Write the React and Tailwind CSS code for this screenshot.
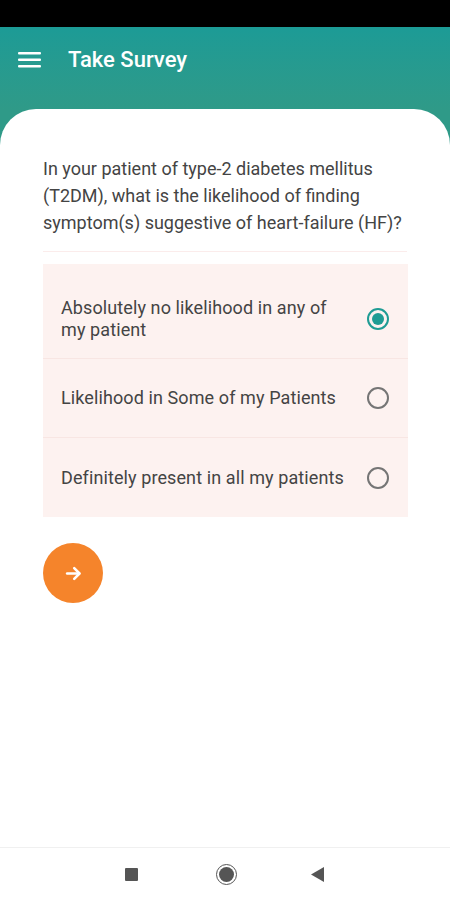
import React, { useState } from "react";

const options = [
  "Absolutely no likelihood in any of my patient",
  "Likelihood in Some of my Patients",
  "Definitely present in all my patients",
];

const Radio = ({ checked }) => (
  <div
    className={`w-[22px] h-[22px] rounded-full border-2 flex items-center justify-center shrink-0 ${
      checked ? "border-[#1f9c94]" : "border-[#757575]"
    }`}
  >
    {checked && <div className="w-[12px] h-[12px] rounded-full bg-[#1f9c94]" />}
  </div>
);

const App = () => {
  const [selected, setSelected] = useState(0);

  return (
    <div
      className="w-[450px] h-[900px] flex flex-col bg-white overflow-hidden"
      style={{ fontFamily: "Roboto, 'Noto Sans', sans-serif" }}
    >
      {/* Status bar */}
      <div className="h-[27px] bg-black shrink-0" />

      {/* Header */}
      <div className="bg-gradient-to-b from-[#1c9b96] to-[#2f9a88] shrink-0">
        <div className="h-[65px] flex items-center pl-[18px]">
          <svg width="24" height="18" viewBox="0 0 24 18" className="mt-[1px]">
            <rect x="0" y="1" width="23" height="2.6" rx="1" fill="white" />
            <rect x="0" y="7.5" width="23" height="2.6" rx="1" fill="white" />
            <rect x="0" y="14" width="23" height="2.6" rx="1" fill="white" />
          </svg>
          <h1 className="ml-[26px] text-white text-[22px] font-medium">Take Survey</h1>
        </div>
        <div className="h-[17px]" />
      </div>

      {/* Card */}
      <div className="flex-1 bg-[#2f9a88]">
        <div className="h-full bg-white rounded-t-[36px] px-[43px] pt-[46px] flex flex-col">
          <p className="text-[18px] leading-[27px] text-[#444]">
            In your patient of type-2 diabetes mellitus (T2DM), what is the likelihood of finding
            symptom(s) suggestive of heart-failure (HF)?
          </p>
          <div className="h-[1px] bg-[#fbeceb] mt-[15px]" />

          <div className="mt-[12px] bg-[#fdf2f0] pt-[16px] w-[365px]">
            {options.map((opt, i) => (
              <div
                key={i}
                onClick={() => setSelected(i)}
                className={`h-[79px] flex items-center justify-between pl-[18px] pr-[19px] cursor-pointer ${
                  i < options.length - 1 ? "border-b border-[#f8e6e3]" : ""
                }`}
              >
                <span className="text-[18px] leading-[22px] text-[#444] w-[285px] tracking-[0.1px]">{opt}</span>
                <Radio checked={selected === i} />
              </div>
            ))}
          </div>

          <button className="mt-[26px] w-[60px] h-[60px] rounded-full bg-[#f5842b] flex items-center justify-center">
            <svg width="17" height="17" viewBox="0 0 24 24" fill="none" stroke="white" strokeWidth="3.6" strokeLinecap="round" strokeLinejoin="round">
              <path d="M3 12h17" />
              <path d="M13 4.5l7.5 7.5-7.5 7.5" />
            </svg>
          </button>
        </div>
      </div>

      {/* Nav bar */}
      <div className="h-[53px] border-t border-[#f0f0f0] bg-white flex items-center pl-[125px] shrink-0">
        <div className="w-[13px] h-[13px] bg-[#555] rounded-[1px]" />
        <div className="ml-[78px] w-[21px] h-[21px] rounded-full border-[1.5px] border-[#555] flex items-center justify-center">
          <div className="w-[15px] h-[15px] rounded-full bg-[#555]" />
        </div>
        <svg className="ml-[74px]" width="14" height="15" viewBox="0 0 14 15">
          <polygon points="13,0 13,15 0,7.5" fill="#555" />
        </svg>
      </div>
    </div>
  );
};

export default App;
